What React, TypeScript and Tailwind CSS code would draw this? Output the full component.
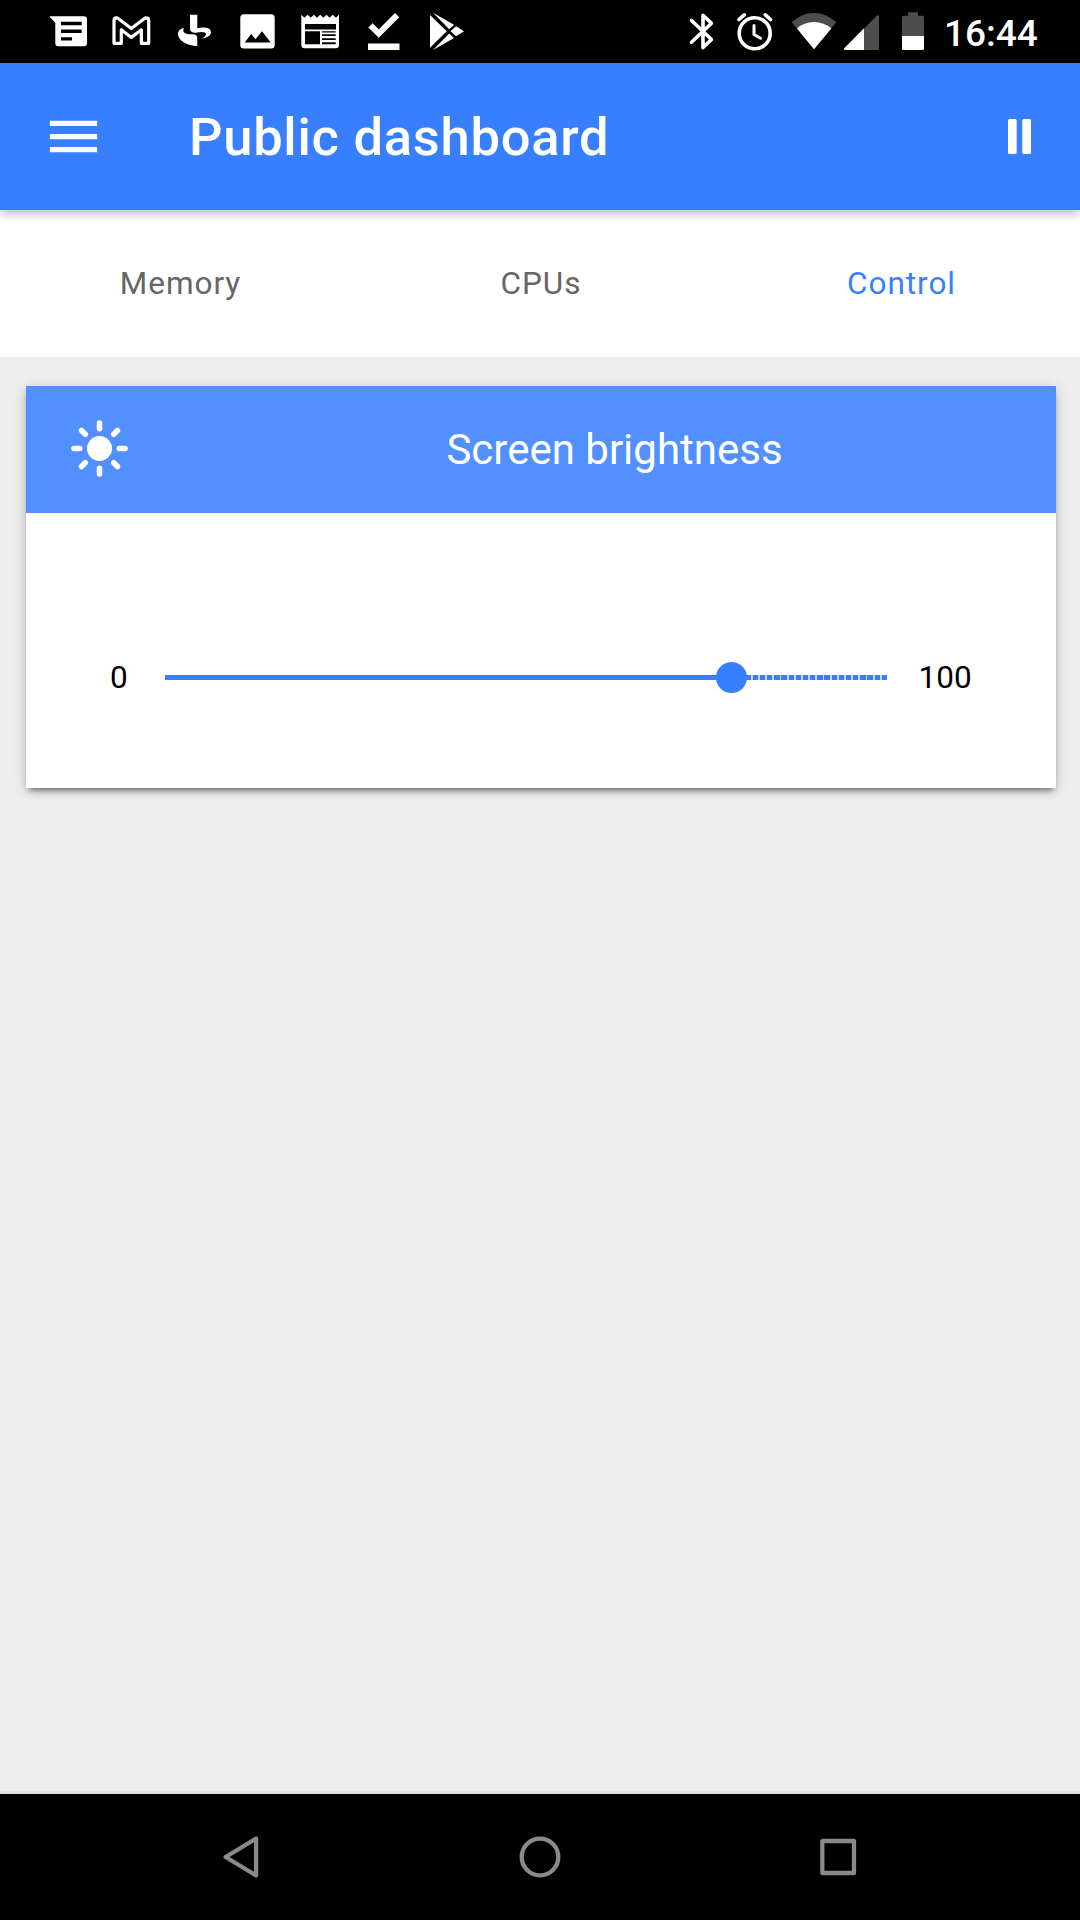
import type { ReactNode } from "react";

// Status bar glyph: the viewBox starts at the glyph's own offset along the bar.
function Glyph({ x, w, children }: { x: number; w: number; children: ReactNode }) {
  return (
    <svg width={w} height={63} viewBox={`${x} 0 ${w} 63`} className="shrink-0" fill="white">
      {children}
    </svg>
  );
}

function StatusBar() {
  return (
    <div className="flex h-[63px] items-center bg-black pl-[37px] text-white">
      <Glyph x={37} w={63}>
        <path d="M49.3 16.3H84q3 0 3 3v24q0 3-3 3H58.300q-3 0-3-3V23z" />
        <path d="M61 21.800h20.700v3.400H61zM61 29.500h20.700v3.400H61zM61 37.200h11v3.400H61z" fill="black" />
      </Glyph>
      <Glyph x={100} w={63}>
        <path d="M114 43.300V20.500q0-2.700 2.600-2.700l1.200.5 13.500 10.200 13.500-10.200 1.200-.5q2.700 0 2.700 2.700v22.800h-7.300V29.800l-10.100 7.600-10-7.600v13.500z" fill="none" stroke="white" strokeWidth="3.200" strokeLinejoin="round" />
      </Glyph>
      <Glyph x={163} w={63}>
        <path d="M190 14.700h7.300v13.500c6-1.500 13.700-.8 13.700 3.800 0 4-5 6.300-9.500 6.300 3.200-1 4.500-2.600 4.500-4 0-2.300-4-3-8.700-1.800-3.300.8-7.300-.5-7.300-3.800z" />
        <path d="M184 28c-1.500 2.300-.8 4.500 1.700 5.500 3.500 1.400 7.800.2 10 1.500 1 .6 1.600 1.800 1.600 3.500V46.300c-9.500-.8-19.300-5.300-19.300-12.300 0-3.500 2.500-5.500 6-6z" />
      </Glyph>
      <Glyph x={226} w={63}>
        <rect x="240.300" y="14.300" width="34.400" height="34.200" rx="3.500" />
        <path d="M244.700 42.500l6.500-8.500 4.300 5.300 6.500-8 8.700 11.200z" fill="black" />
      </Glyph>
      <Glyph x={289} w={63}>
        <path d="M301.300 14.700l3.100 3 3.200-3 3.100 3 3.200-3 3.100 3 3.200-3 3.100 3 3.200-3 3.100 3 3.200-3 3.100 3 3.100-3V45q0 3.300-3.300 3.300h-31.100q-3.300 0-3.300-3.300z" />
        <path d="M305 24h31v5.500h-31zM305 31.300h15v13h-15zM322 31.300h13.700v1.300H322zM322 34.300h13.700v1.800H322zM322 38.200h13.700v1.800H322zM322 42.200h13.700v2H322z" fill="black" />
      </Glyph>
      <Glyph x={352} w={63}>
        <path d="M370.500 25.300l8.300 8.300 18.300-18.500" fill="none" stroke="white" strokeWidth="6" />
        <path d="M368 43.500h31.500v6.500H368z" />
      </Glyph>
      <Glyph x={415} w={63}>
        <path d="M430 15l16.800 16.300L430 47.800zM433 12.700L454 24.800l-4.800 4.500zM433 50l21-12-4.800-4.500zM450.500 31.300l5.500-5 8 5-8 5z" />
      </Glyph>

      <div className="ml-auto flex items-center">
        <Glyph x={680} w={46}>
          <path d="M691.500 20.500l20 19-8.500 8V15.200l8.500 8-20 19" fill="none" stroke="white" strokeWidth="3.600" strokeLinecap="round" strokeLinejoin="round" />
        </Glyph>
        <Glyph x={726} w={56}>
          <g fill="none" stroke="white">
            <circle cx="754.700" cy="33.300" r="15.500" strokeWidth="3.600" />
            <path d="M754 25.500v9l6.500 3.800" strokeWidth="3" strokeLinecap="round" strokeLinejoin="round" />
            <path d="M739 19.500l5.200-4.700M765.300 14.800l5.200 4.700" strokeWidth="3.600" strokeLinecap="round" />
          </g>
        </Glyph>
        <Glyph x={782} w={58}>
          <path d="M791.700 22.300Q802 13 814 13t22.300 9.300L814 49.300z" fill="#4d4d4d" />
          <path d="M797 28.500Q804 22 814 22t17.300 6.500L814 49.300z" />
        </Glyph>
        <Glyph x={840} w={50}>
          <path d="M844.500 50q-1-1 0-2l32.500-32.500q2-1 2 1V48.500q0 1.500-1.500 1.500z" fill="#4d4d4d" />
          <path d="M844.500 50q-1-1 0-2L864 28.300V50z" />
        </Glyph>
        <Glyph x={890} w={48}>
          <path d="M908 12.200h10v3.500h4.500q1.500 0 1.500 1.500V36h-22V17.200q0-1.500 1.500-1.500h4.500z" fill="#4d4d4d" />
          <path d="M902 36h22v12.500q0 1.500-1.500 1.500h-19q-1.500 0-1.500-1.500z" />
        </Glyph>
        <span className="w-[142px] pt-[4px] pl-[6px] text-[37px] leading-none font-medium">16:44</span>
      </div>
    </div>
  );
}

function AppBar() {
  return (
    <header className="relative z-10 flex h-[147px] items-center bg-[#387fff] pr-[29px] pl-[42px] text-white shadow-[0_3px_10px_rgba(0,0,0,0.3)]">
      <svg width="63" height="63" viewBox="0 0 24 24" fill="white">
        <path d="M3 6h18v2H3zM3 11h18v2H3zM3 16h18v2H3z" />
      </svg>
      <h1 className="ml-[84px] pt-[2px] text-[52.5px] leading-none font-medium tracking-[0.72px]">Public dashboard</h1>
      <svg width="63" height="63" viewBox="988 105 63 63" fill="white" className="ml-auto">
        <rect x="1008" y="119" width="8.700" height="35" rx="1.500" />
        <rect x="1022.300" y="119" width="8.700" height="35" rx="1.500" />
      </svg>
    </header>
  );
}

function Tabs() {
  return (
    <nav className="grid h-[147px] grid-cols-3 items-center bg-white text-center text-[31.5px] leading-none tracking-[0.95px] text-[#666666]">
      <span className="pl-px">Memory</span>
      <span className="pl-[2px]">CPUs</span>
      <span className="pl-[3px] text-[#387fff]">Control</span>
    </nav>
  );
}

function Sun() {
  return (
    <svg width="63" height="63" viewBox="-31.500 -31.500 63 63" className="mb-[2px] shrink-0">
      <circle r="12.500" fill="white" />
      <path
        d="M0-25.600V-19.800M0 19.800V25.600M-25.600 0H-19.800M19.800 0H25.600M-18-18l3.800 3.800M18-18l-3.800 3.800M-18 18l3.800-3.800M18 18l-3.800-3.800"
        stroke="white"
        strokeWidth="5.500"
        strokeLinecap="round"
      />
    </svg>
  );
}

function BrightnessCard() {
  return (
    <section className="mr-[24px] ml-[26px] bg-white shadow-[0_5px_6px_-3px_rgba(0,0,0,0.5),0_2px_12px_rgba(0,0,0,0.2)]">
      <div className="flex h-[127px] items-center bg-[#528fff] pl-[42px] text-white">
        <Sun />
        <h2 className="flex-1 pl-[42px] text-center text-[42px] leading-none">Screen brightness</h2>
      </div>
      <div className="flex h-[275px] items-center pt-[54px] text-[31.5px] leading-none text-black">
        <span className="w-[139px] pl-[84px]">0</span>
        <div className="relative h-[5px] w-[722px] bg-[#c3d9ff]">
          <div className="h-full bg-[repeating-linear-gradient(90deg,#387fff_0_5.25px,transparent_5.25px_7.168px)]" />
          <div className="absolute top-0 left-0 h-full w-[566px] bg-[#387fff]" />
          <div className="absolute -top-[13.5px] left-[550.5px] size-[31.5px] rounded-full bg-[#387fff]" />
        </div>
        <span className="pl-[31.5px]">100</span>
      </div>
    </section>
  );
}

function NavBar() {
  return (
    <footer className="flex h-[126px] items-center bg-black">
      <svg width="1080" height="126" viewBox="0 1794 1080 126" fill="none" stroke="#8a8a8a" strokeWidth="4.300" strokeLinejoin="round">
        <path d="M225.600 1857l30.500-18.500v37z" />
        <circle cx="540" cy="1857" r="18.300" />
        <rect x="822.300" y="1841" width="31.700" height="32" rx="0.500" />
      </svg>
    </footer>
  );
}

export default function App() {
  return (
    <div className="flex h-[1920px] w-[1080px] flex-col overflow-hidden bg-[#eeeeee] font-['Roboto',sans-serif]">
      <StatusBar />
      <AppBar />
      <Tabs />
      <main className="flex-1 border-b-[3px] border-[#e2e2e2] pt-[29px]">
        <BrightnessCard />
      </main>
      <NavBar />
    </div>
  );
}
